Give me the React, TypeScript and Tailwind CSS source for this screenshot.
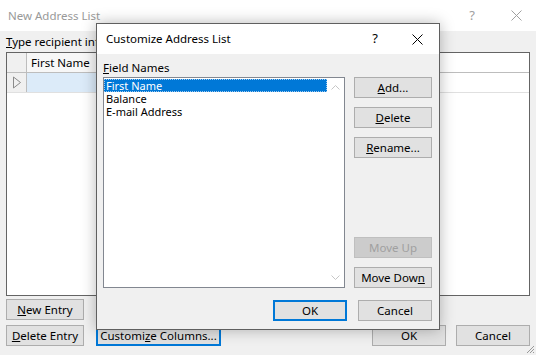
import React from "react"

const font = { fontFamily: '"Noto Sans", "Open Sans", sans-serif' }

function Btn({
  children,
  className = "",
  focused = false,
  disabled = false
}: {
  children: React.ReactNode
  className?: string
  focused?: boolean
  disabled?: boolean
}) {
  const look = disabled
    ? "bg-[#cccccc] border-[#bfbfbf] text-[#a0a0a0]"
    : focused
      ? "bg-[#e1e1e1] border-[#0078d7] border-2 text-black"
      : "bg-[#e1e1e1] border-[#adadad] text-black"
  return (
    <div
      className={`flex items-center justify-center border text-[11.5px] leading-none h-[21px] ${look} ${className}`}
    >
      {children}
    </div>
  )
}

export default function App() {
  return (
    <div className="relative w-[536px] h-[355px] overflow-hidden bg-[#f0f0f0] text-black" style={font}>
      {/* background window */}
      <div className="h-[31px] bg-white flex items-center justify-between pl-2 pr-[14px]">
        <span className="text-[11.5px] text-[#999999]">New Address List</span>
        <div className="flex items-center gap-[36px] text-[#a0a0a0]">
          <span className="text-[13px]">?</span>
          <svg width="11" height="11" viewBox="0 0 11 11">
            <path d="M0.5 0.5 L10.5 10.5 M10.5 0.5 L0.5 10.5" stroke="#a0a0a0" strokeWidth="1" />
          </svg>
        </div>
      </div>

      <div className="px-[6px]">
        <div className="h-[21px] pt-[5px] text-[11.5px] leading-none">
          <u>T</u>ype recipient information in the table
        </div>
        <div className="h-[244px] border border-[#646464] bg-white">
          <div className="flex h-[20px] border-b border-[#bdbdbd]">
            <div className="w-[20px] border-r border-[#bdbdbd] bg-[#f0f0f0]" />
            <div className="w-[120px] pl-[4px] flex items-center text-[11.5px] border-r border-[#e5e5e5] bg-[#f7f7f7]">
              First Name
            </div>
          </div>
          <div className="flex h-[20px] border-b border-[#e0e0e0]">
            <div className="w-[20px] border-r border-[#bdbdbd] bg-[#f0f0f0] flex items-center justify-center">
              <svg width="10" height="13" viewBox="0 0 10 13">
                <path d="M1.5 1 L8.5 6.5 L1.5 12 Z" fill="none" stroke="#8a8a8a" strokeWidth="1" />
              </svg>
            </div>
            <div className="w-[120px] bg-[#dcebf9]" />
          </div>
        </div>

        <div className="flex flex-col gap-[5px] mt-[3px]">
          <Btn className="w-[78px]">
            <span><u>N</u>ew Entry</span>
          </Btn>
          <div className="flex items-center">
            <Btn className="w-[78px]">
              <span><u>D</u>elete Entry</span>
            </Btn>
            <Btn focused className="w-[125px] ml-[12px]">
              <span>Customi<u>z</u>e Columns...</span>
            </Btn>
            <Btn className="w-[74px] ml-[151px]">OK</Btn>
            <Btn className="w-[74px] ml-[10px]">Cancel</Btn>
          </div>
        </div>
      </div>

      <svg className="absolute right-[1px] bottom-[1px]" width="10" height="10" viewBox="0 0 10 10">
        <path d="M9 2 L2 9 M9 5 L5 9 M9 8 L8 9" stroke="#9a9a9a" strokeWidth="1" />
      </svg>

      {/* Customize Address List dialog */}
      <div className="absolute left-[96px] top-[23px] w-[344px] h-[307px] border border-[#5f5f5f] bg-[#f0f0f0] shadow-[0_0_14px_rgba(0,0,0,0.28)] flex flex-col">
        <div className="h-[30px] bg-white flex items-center justify-between pl-[9px] pr-[16px]">
          <span className="text-[11.5px]">Customize Address List</span>
          <div className="flex items-center gap-[34px]">
            <span className="text-[13px]">?</span>
            <svg width="11" height="11" viewBox="0 0 11 11">
              <path d="M0.5 0.5 L10.5 10.5 M10.5 0.5 L0.5 10.5" stroke="#000" strokeWidth="1" />
            </svg>
          </div>
        </div>

        <div className="flex-1 pl-[6px] pr-[7px]">
          <div className="h-[23px] pt-[8px] text-[11.5px] leading-none">
            <u>F</u>ield Names
          </div>
          <div className="flex gap-[9px]">
            <div className="w-[242px] h-[211px] border border-[#828790] bg-white flex">
              <div className="flex-1 pt-[1px] text-[11px] leading-[13px]">
                <div className="bg-[#0078d7] text-white pl-[2px] outline-1 outline-dotted outline-[#9fc9ee] -outline-offset-1">
                  First Name
                </div>
                <div className="pl-[2px]">Balance</div>
                <div className="pl-[2px]">E-mail Address</div>
              </div>
              <div className="w-[17px] flex flex-col justify-between items-center py-[7px]">
                <svg width="9" height="5" viewBox="0 0 9 5">
                  <path d="M0.5 4.5 L4.5 0.5 L8.5 4.5" fill="none" stroke="#c6c6c6" strokeWidth="1" />
                </svg>
                <svg width="9" height="5" viewBox="0 0 9 5">
                  <path d="M0.5 0.5 L4.5 4.5 L8.5 0.5" fill="none" stroke="#c6c6c6" strokeWidth="1" />
                </svg>
              </div>
            </div>

            <div className="w-[78px] flex flex-col">
              <div className="flex flex-col gap-[9px]">
                <Btn><span><u>A</u>dd...</span></Btn>
                <Btn><span><u>D</u>elete</span></Btn>
                <Btn><span><u>R</u>ename...</span></Btn>
              </div>
              <div className="mt-auto flex flex-col gap-[9px]">
                <Btn disabled>Move Up</Btn>
                <Btn><span>Move Dow<u>n</u></span></Btn>
              </div>
            </div>
          </div>

          <div className="flex justify-end gap-[11px] mt-[12px]">
            <Btn focused className="w-[74px]">OK</Btn>
            <Btn className="w-[74px]">Cancel</Btn>
          </div>
        </div>
      </div>
    </div>
  )
}
